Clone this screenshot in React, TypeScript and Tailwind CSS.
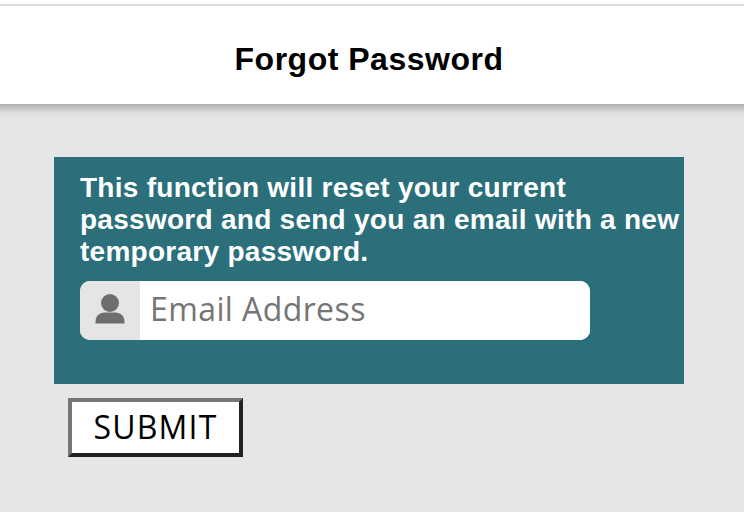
import { useState } from "react";

function PersonIcon() {
  return (
    <svg width="30" height="31" viewBox="0 0 30 31" fill="#6d6e70" aria-hidden="true">
      <circle cx="15" cy="9" r="9" />
      <path d="M0.5 29.5V28C0.5 22 4.5 18.6 9.5 18.6H20.5C25.5 18.6 29.5 22 29.5 28V29.5Z" />
    </svg>
  );
}

export default function App() {
  const [email, setEmail] = useState("");

  return (
    <main className="h-screen overflow-hidden bg-[#e5e6e8]">
      <header className="-mx-4 h-[104px] bg-white pt-1 shadow-[0_1px_11px_1px_#8c908c]">
        <div className="flex h-[100px] justify-center border-t-2 border-[#dcdcdf] pt-[35px] pr-1.5">
          <h1 className="whitespace-nowrap font-['Liberation_Sans',sans-serif] text-[32px] leading-9 font-bold tracking-[0.5px] text-black">
            Forgot Password
          </h1>
        </div>
      </header>

      <form className="pt-[53px] pl-[54px]" onSubmit={(e) => e.preventDefault()}>
        <section className="h-[227px] w-[630px] bg-[#2b6f7b] pt-[15px] pl-[26px]">
          <p className="whitespace-nowrap font-['Liberation_Sans',sans-serif] text-[28px] leading-8 font-bold tracking-[0.27px] text-white">
            This function will reset your current
            <br />
            password and send you an email with a new
            <br />
            temporary password.
          </p>
          <div className="mt-[13px] flex h-[59px] w-[510px] overflow-hidden rounded-[10px] bg-white">
            <label htmlFor="email" className="flex w-[60px] items-center justify-center bg-[#e5e5e5] pb-0.5">
              <PersonIcon />
            </label>
            <input
              id="email"
              type="email"
              value={email}
              onChange={(e) => setEmail(e.target.value)}
              placeholder="Email Address"
              className="min-w-0 flex-1 bg-white px-2.5 pb-1 font-['Open_Sans',sans-serif] text-[32px] tracking-[0.4px] text-black outline-none placeholder:text-[#757575]"
            />
          </div>
        </section>

        <button
          type="submit"
          className="mt-[14px] ml-[14px] flex h-[59px] w-[175px] items-center justify-center border-4 border-t-[#767676] border-r-[#212121] border-b-[#212121] border-l-[#767676] bg-white pb-0.5 font-['Open_Sans',sans-serif] text-[32px] tracking-[1.2px] text-black"
        >
          SUBMIT
        </button>
      </form>
    </main>
  );
}
